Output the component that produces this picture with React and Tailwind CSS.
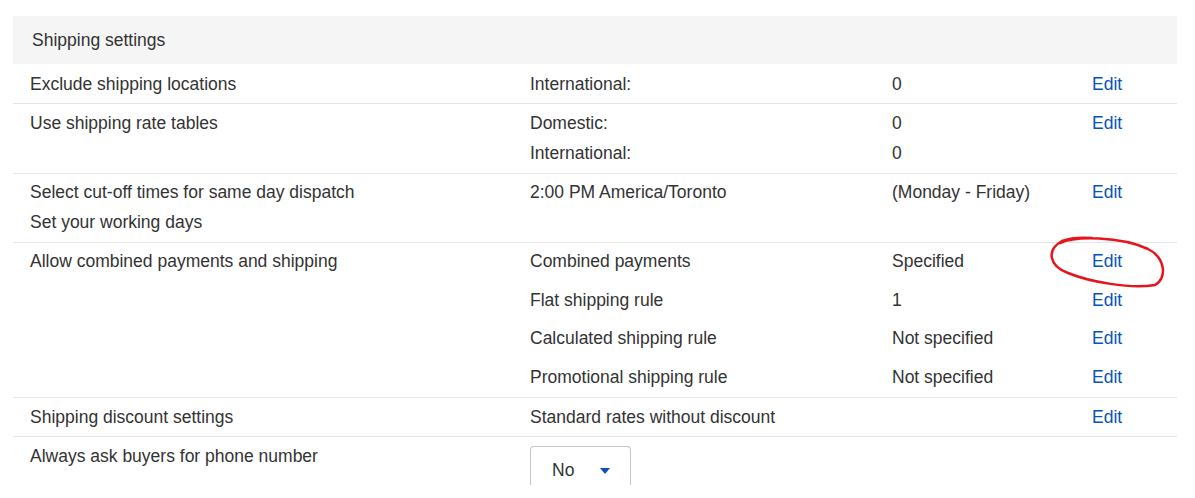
import React from 'react';

const font = { fontFamily: '"Liberation Sans", Arial, sans-serif' };

const EditLink = () => (
  <a href="#" className="text-[#0654ba] hover:underline">Edit</a>
);

const Row = ({ children, className = '' }) => (
  <div className={`grid grid-cols-[500px_362px_200px_1fr] border-b border-[#e5e5e5] ${className}`}>
    {children}
  </div>
);

const Cell = ({ children, className = '' }) => (
  <div className={`pl-[17px] ${className}`}>{children}</div>
);

const combined = [
  { label: 'Combined payments', value: 'Specified' },
  { label: 'Flat shipping rule', value: '1' },
  { label: 'Calculated shipping rule', value: 'Not specified' },
  { label: 'Promotional shipping rule', value: 'Not specified' },
];

export default function App() {
  return (
    <div className="relative w-[1195px] h-[498px] overflow-hidden bg-white text-[17.5px] text-[#333]" style={font}>
      <div className="ml-[13px] mt-[16px] w-[1164px]">
        <div className="h-[48px] bg-[#f5f5f5] pl-[19px] flex items-center">Shipping settings</div>

        <Row className="h-[40px] items-center leading-[30px]">
          <Cell>Exclude shipping locations</Cell>
          <Cell>International:</Cell>
          <Cell>0</Cell>
          <Cell><EditLink /></Cell>
        </Row>

        <Row className="h-[70px] pt-[4px] leading-[30px]">
          <Cell>Use shipping rate tables</Cell>
          <Cell>
            <div>Domestic:</div>
            <div>International:</div>
          </Cell>
          <Cell>
            <div>0</div>
            <div>0</div>
          </Cell>
          <Cell><EditLink /></Cell>
        </Row>

        <Row className="h-[69px] pt-[3px] leading-[30px]">
          <Cell>
            <div>Select cut-off times for same day dispatch</div>
            <div>Set your working days</div>
          </Cell>
          <Cell>2:00 PM America/Toronto</Cell>
          <Cell>(Monday - Friday)</Cell>
          <Cell><EditLink /></Cell>
        </Row>

        <Row className="h-[155px]">
          <Cell className="h-[37px] flex items-center">Allow combined payments and shipping</Cell>
          <div className="col-span-3 -mt-[1px]">
            {combined.map((c) => (
              <div key={c.label} className="grid grid-cols-[362px_200px_1fr] h-[38.5px] items-center">
                <Cell>{c.label}</Cell>
                <Cell>{c.value}</Cell>
                <Cell><EditLink /></Cell>
              </div>
            ))}
          </div>
        </Row>

        <Row className="h-[39px] items-center">
          <Cell>Shipping discount settings</Cell>
          <Cell>Standard rates without discount</Cell>
          <Cell></Cell>
          <Cell><EditLink /></Cell>
        </Row>

        <div className="grid grid-cols-[500px_1fr] pt-[9px]">
          <Cell className="leading-[20px]">Always ask buyers for phone number</Cell>
          <Cell>
            <div className="w-[101px] h-[39px] border border-b-0 border-[#c7c7c7] rounded-t-[4px] flex items-center pl-[21px] pt-[9px]">
              <span>No</span>
              <svg className="ml-[26px]" width="10" height="6" viewBox="0 0 10 6">
                <path d="M0 0 L10 0 L5 6 Z" fill="#0654ba" />
              </svg>
            </div>
          </Cell>
        </div>
      </div>

      <svg className="absolute left-0 top-0 pointer-events-none" width="1195" height="498" viewBox="0 0 1195 498">
        <path
          d="M1060,243 C1075,236 1120,236 1148,249 C1166,258 1167,279 1155,285 C1130,289 1090,282 1068,273 C1049,266 1046,250 1062,241 C1070,238 1080,237 1092,238"
          fill="none"
          stroke="#e8141c"
          strokeWidth="2.5"
          strokeLinecap="round"
        />
      </svg>
    </div>
  );
}
